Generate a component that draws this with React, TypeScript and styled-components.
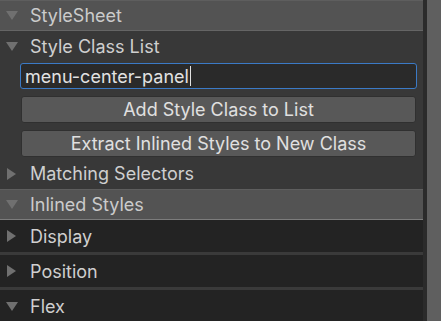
import React from 'react';
import styled, { createGlobalStyle } from 'styled-components';

const GlobalStyle = createGlobalStyle`
  html, body {
    margin: 0;
    padding: 0;
    background: #383838;
  }
  body {
    font-family: Inter, "Noto Sans", sans-serif;
    -webkit-font-smoothing: antialiased;
  }
`;

const Page = styled.div`
  display: flex;
  width: 441px;
  height: 321px;
  overflow: hidden;
`;

const Inspector = styled.div`
  width: 423px;
  display: flex;
  flex-direction: column;
  background: #383838;

  & > * {
    flex-shrink: 0;
  }
`;

const Divider = styled.div`
  width: 4px;
  background: #2b2b2b;
`;

const Scrollbar = styled.div`
  flex: 1;
  background: #5f5f5f;
`;

const Arrow = styled.span<{ open: boolean }>`
  flex: none;
  width: 0;
  height: 0;
  margin-left: ${p => (p.open ? '6px' : '7px')};
  margin-right: ${p => (p.open ? '12px' : '14px')};
  ${p =>
    p.open
      ? `border-left: 6px solid transparent;
         border-right: 6px solid transparent;
         border-top: 9px solid #707070;`
      : `border-top: 6px solid transparent;
         border-bottom: 6px solid transparent;
         border-left: 9px solid #707070;`}
`;

const SectionHeader = styled.div<{ accent?: boolean }>`
  display: flex;
  align-items: center;
  height: 29px;
  background: #535353;
  border-top: 1px solid #5e5e5e;
  border-bottom: ${p => (p.accent ? '1px solid #7c7c7c' : '1px solid #656565')};
  color: #cbcbcb;
  font-size: 18px;
`;

const Foldout = styled.div<{ tall?: boolean }>`
  display: flex;
  align-items: center;
  height: ${p => (p.tall ? '31px' : '30px')};
  color: #cfcfcf;
  font-size: 18px;
`;

const Fields = styled.div`
  display: flex;
  flex-direction: column;
  gap: 7px;
  padding: 2px 6px 1px 20px;
`;

const TextInput = styled.div`
  height: 24px;
  display: flex;
  align-items: center;
  padding-left: 4px;
  background: #2a2a2a;
  border: 1px solid #3b7ac6;
  border-radius: 3px;
  color: #e2e2e2;
  font-size: 18px;
`;

const Caret = styled.span`
  display: inline-block;
  width: 1px;
  height: 20px;
  margin-left: 1px;
  background: #e2e2e2;
`;

const Button = styled.div`
  height: 25px;
  margin: 0 1px;
  display: flex;
  align-items: center;
  justify-content: center;
  background: #585858;
  border: 1px solid #303030;
  border-radius: 3px;
  color: #e0e0e0;
  font-size: 18px;
`;

const Row = styled.div`
  display: flex;
  align-items: center;
  height: 32px;
  background: #232323;
  border-bottom: 3px solid #3a3a3a;
  color: #cfcfcf;
  font-size: 18px;
`;

export default function App() {
  return (
    <Page>
      <GlobalStyle />
      <Inspector>
        <SectionHeader>
          <Arrow open />
          StyleSheet
        </SectionHeader>
        <Foldout>
          <Arrow open />
          Style Class List
        </Foldout>
        <Fields>
          <TextInput>
            menu-center-panel
            <Caret />
          </TextInput>
          <Button>Add Style Class to List</Button>
          <Button>Extract Inlined Styles to New Class</Button>
        </Fields>
        <Foldout tall>
          <Arrow open={false} />
          Matching Selectors
        </Foldout>
        <SectionHeader accent>
          <Arrow open />
          Inlined Styles
        </SectionHeader>
        <Row>
          <Arrow open={false} />
          Display
        </Row>
        <Row>
          <Arrow open={false} />
          Position
        </Row>
        <Row>
          <Arrow open />
          Flex
        </Row>
      </Inspector>
      <Divider />
      <Scrollbar />
    </Page>
  );
}
